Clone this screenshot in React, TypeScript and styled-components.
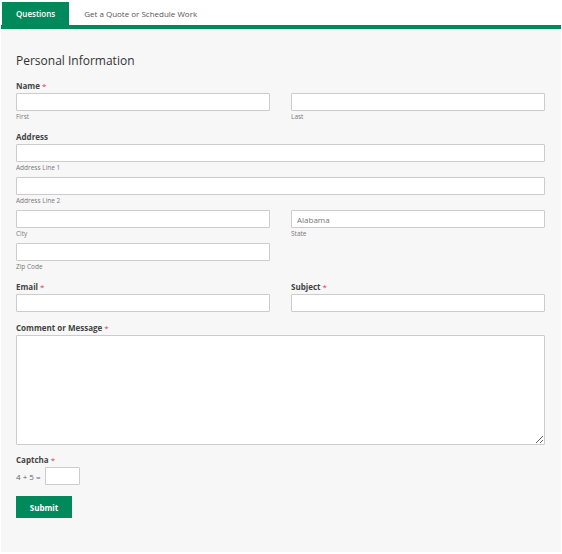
import React, { useState } from 'react';
import styled, { createGlobalStyle } from 'styled-components';

const GlobalStyle = createGlobalStyle`
  html, body {
    margin: 0;
    padding: 0;
    background: #ffffff;
  }
  body {
    font-family: 'Open Sans', 'Liberation Sans', Arial, sans-serif;
    -webkit-font-smoothing: antialiased;
  }
  * {
    box-sizing: border-box;
  }
`;

const GREEN = '#00895a';

const Page = styled.div`
  width: 562px;
  padding: 2px 1px 3px 1px;
`;

const TabBar = styled.div`
  display: flex;
  border-bottom: 4px solid ${GREEN};
  padding-left: 1px;
`;

const Tab = styled.button<{ $active?: boolean }>`
  height: 23px;
  padding: 0 ${(p) => (p.$active ? '14px' : '15px')};
  border: none;
  margin: 0;
  font-family: inherit;
  font-size: 8px;
  font-weight: ${(p) => (p.$active ? 600 : 400)};
  color: ${(p) => (p.$active ? '#ffffff' : '#555555')};
  background: ${(p) => (p.$active ? GREEN : 'transparent')};
  cursor: pointer;
`;

const Panel = styled.div`
  background: #f7f7f7;
  padding: 23px 16px 34px 15px;
`;

const Title = styled.h2`
  margin: 0 0 10px 0;
  font-size: 12px;
  line-height: 18px;
  font-weight: 400;
  color: #333333;
`;

const Group = styled.div<{ $gap?: number }>`
  margin-bottom: ${(p) => p.$gap ?? 9}px;
`;

const Label = styled.div`
  font-size: 8px;
  line-height: 11px;
  font-weight: 700;
  color: #444444;
  margin-bottom: 2px;
`;

const Required = styled.span`
  color: #e2403a;
  font-weight: 400;
  margin-left: 2px;
`;

const Row = styled.div<{ $cols?: number; $top?: number }>`
  display: grid;
  grid-template-columns: ${(p) => (p.$cols === 2 ? '1fr 1fr' : '1fr')};
  column-gap: 21px;
  row-gap: 4px;
  margin-top: ${(p) => p.$top ?? 0}px;
`;

const SubField = styled.div`
  display: flex;
  flex-direction: column;
`;

const TextInput = styled.input`
  display: block;
  width: 100%;
  height: 18px;
  border: 1px solid #cccccc;
  border-radius: 1px;
  background: #ffffff;
  padding: 0 6px;
  font-family: inherit;
  font-size: 8px;
  color: #555555;
  outline: none;
`;

const Select = styled.select`
  display: block;
  width: 100%;
  height: 18px;
  border: 1px solid #cccccc;
  border-radius: 1px;
  background: #ffffff;
  padding: 0 5px;
  font-family: inherit;
  font-size: 8px;
  color: #777777;
  appearance: none;
  -webkit-appearance: none;
  outline: none;
`;

const SubLabel = styled.div`
  margin-top: 1px;
  font-size: 6.5px;
  line-height: 10px;
  color: #777777;
`;

const TextArea = styled.textarea`
  display: block;
  width: 100%;
  height: 110px;
  border: 1px solid #cccccc;
  border-radius: 1px;
  background: #ffffff;
  padding: 4px 6px;
  font-family: inherit;
  font-size: 8px;
  outline: none;
`;

const CaptchaRow = styled.div`
  display: flex;
  align-items: center;
  gap: 4px;
  font-size: 8px;
  color: #666666;
`;

const SmallInput = styled(TextInput)`
  width: 35px;
`;

const SubmitButton = styled.button`
  display: block;
  margin-top: 11px;
  width: 56px;
  height: 22px;
  border: none;
  border-radius: 0;
  background: ${GREEN};
  color: #ffffff;
  font-family: inherit;
  font-size: 8px;
  font-weight: 700;
  cursor: pointer;
`;

const App: React.FC = () => {
  const [tab, setTab] = useState<'questions' | 'quote'>('questions');

  return (
    <>
      <GlobalStyle />
      <Page>
        <TabBar>
          <Tab $active={tab === 'questions'} onClick={() => setTab('questions')}>
            Questions
          </Tab>
          <Tab $active={tab === 'quote'} onClick={() => setTab('quote')}>
            Get a Quote or Schedule Work
          </Tab>
        </TabBar>
        <Panel>
          <Title>Personal Information</Title>

          <Group>
            <Label>
              Name<Required>*</Required>
            </Label>
            <Row $cols={2}>
              <SubField>
                <TextInput />
                <SubLabel>First</SubLabel>
              </SubField>
              <SubField>
                <TextInput />
                <SubLabel>Last</SubLabel>
              </SubField>
            </Row>
          </Group>

          <Group>
            <Label>Address</Label>
            <Row>
              <SubField>
                <TextInput />
                <SubLabel>Address Line 1</SubLabel>
              </SubField>
              <SubField>
                <TextInput />
                <SubLabel>Address Line 2</SubLabel>
              </SubField>
            </Row>
            <Row $cols={2} $top={4}>
              <SubField>
                <TextInput />
                <SubLabel>City</SubLabel>
              </SubField>
              <SubField>
                <Select defaultValue="Alabama">
                  <option>Alabama</option>
                  <option>Alaska</option>
                  <option>Arizona</option>
                </Select>
                <SubLabel>State</SubLabel>
              </SubField>
              <SubField>
                <TextInput />
                <SubLabel>Zip Code</SubLabel>
              </SubField>
            </Row>
          </Group>

          <Group $gap={10}>
            <Row $cols={2}>
              <div>
                <Label>
                  Email<Required>*</Required>
                </Label>
                <TextInput />
              </div>
              <div>
                <Label>
                  Subject<Required>*</Required>
                </Label>
                <TextInput />
              </div>
            </Row>
          </Group>

          <Group>
            <Label>
              Comment or Message<Required>*</Required>
            </Label>
            <TextArea />
          </Group>

          <div>
            <Label>
              Captcha<Required>*</Required>
            </Label>
            <CaptchaRow>
              <span>4 + 5 =</span>
              <SmallInput />
            </CaptchaRow>
          </div>

          <SubmitButton>Submit</SubmitButton>
        </Panel>
      </Page>
    </>
  );
};

export default App;
